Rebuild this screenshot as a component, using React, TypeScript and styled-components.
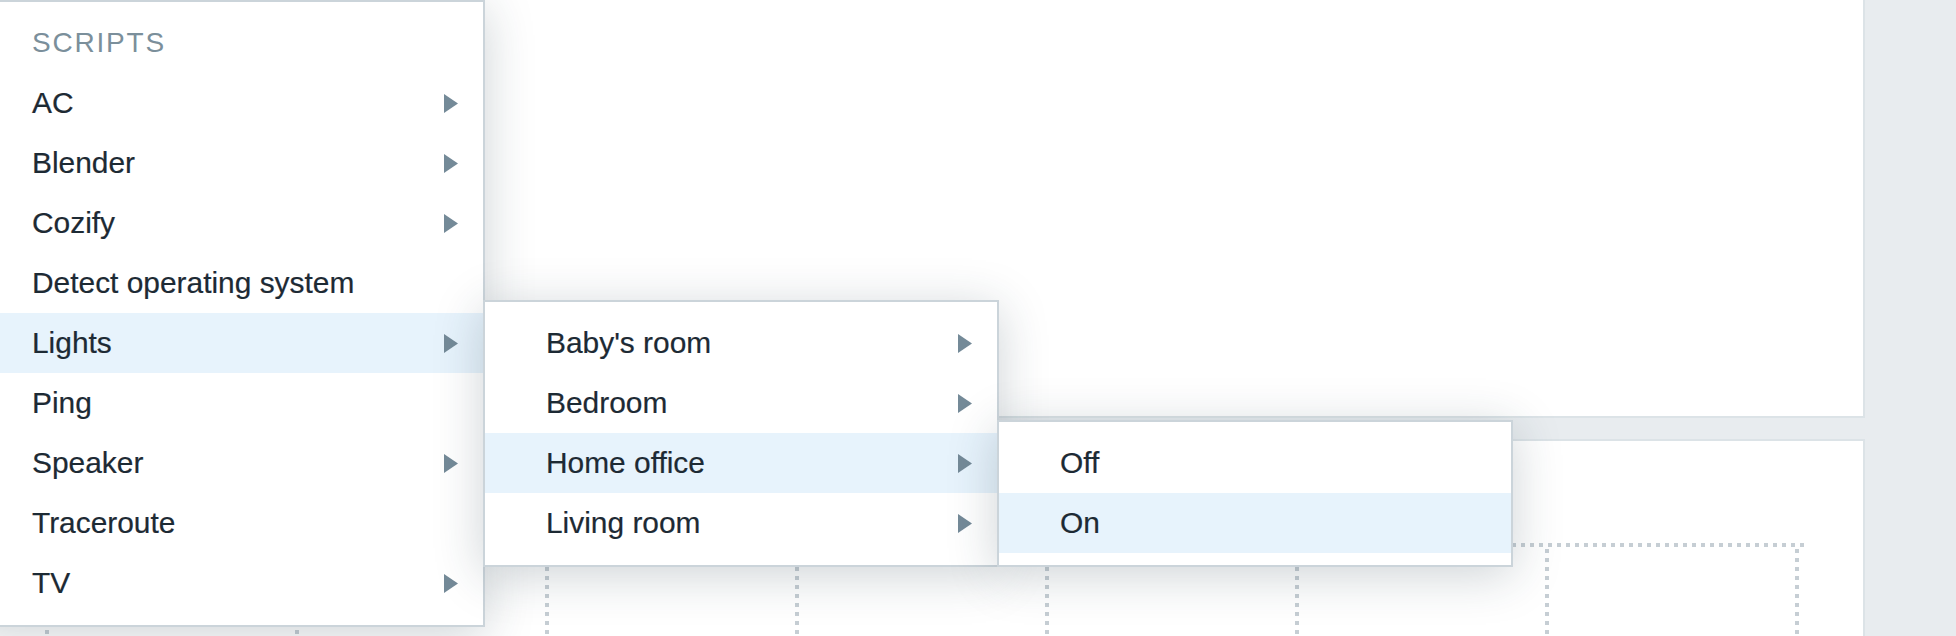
import * as React from "react";
import styled, { createGlobalStyle } from "styled-components";

interface MenuEntry {
  label: string;
  hasSub?: boolean;
  active?: boolean;
  children?: MenuEntry[];
}

const homeOffice: MenuEntry[] = [
  { label: "Off" },
  { label: "On", active: true },
];

const lights: MenuEntry[] = [
  { label: "Baby's room", hasSub: true },
  { label: "Bedroom", hasSub: true },
  { label: "Home office", hasSub: true, active: true, children: homeOffice },
  { label: "Living room", hasSub: true },
];

const scripts: MenuEntry[] = [
  { label: "AC", hasSub: true },
  { label: "Blender", hasSub: true },
  { label: "Cozify", hasSub: true },
  { label: "Detect operating system" },
  { label: "Lights", hasSub: true, active: true, children: lights },
  { label: "Ping" },
  { label: "Speaker", hasSub: true },
  { label: "Traceroute" },
  { label: "TV", hasSub: true },
];

const GlobalStyle = createGlobalStyle`
  html, body {
    margin: 0;
    padding: 0;
    background: #e8ecef;
    overflow: hidden;
  }
  body {
    font-family: "Liberation Sans", Arial, Helvetica, sans-serif;
    color: #1f2c36;
  }
`;

const Page = styled.div`
  position: relative;
  width: 1956px;
  height: 636px;
  box-sizing: border-box;
  padding-right: 91px;
  display: flex;
  flex-direction: column;
  gap: 21px;
  overflow: hidden;
`;

const TopCard = styled.div`
  height: 418px;
  box-sizing: border-box;
  background: #ffffff;
  border-right: 2px solid #dce3e7;
  border-bottom: 2px solid #dce3e7;
`;

const BottomCard = styled.div`
  flex: 1;
  box-sizing: border-box;
  background: #ffffff;
  border-top: 2px solid #dce3e7;
  border-right: 2px solid #dce3e7;
  padding: 102px 0 0 45px;
`;

const dot = "#c6ced4";

const Grid = styled.div`
  display: flex;
  width: 1762px;
  height: 100%;
  padding-top: 4px;
  background-image: linear-gradient(to right, ${dot} 4px, transparent 4px);
  background-size: 9px 4px;
  background-repeat: repeat-x;
  background-position: 0 0;
`;

interface CellProps {
  $last?: boolean;
}

const GridCell = styled.div<CellProps>`
  width: ${(p) => (p.$last ? "254px" : "250px")};
  flex-shrink: 0;
  height: 100%;
  background-image: linear-gradient(to bottom, ${dot} 4px, transparent 4px)
    ${(p) =>
      p.$last
        ? `, linear-gradient(to bottom, ${dot} 4px, transparent 4px)`
        : ""};
  background-size: 4px 9px;
  background-repeat: repeat-y;
  background-position: ${(p) => (p.$last ? "0 2px, 100% 2px" : "0 2px")};
`;

const MenuLayer = styled.div`
  position: absolute;
  top: 0;
  left: -31px;
  z-index: 5;
`;

const MenuPanel = styled.div`
  width: 516px;
  box-sizing: border-box;
  background: #ffffff;
  border: 2px solid #cbd4da;
  padding: 11px 0 12px;
  box-shadow: 0 8px 46px rgba(34, 54, 70, 0.22);
`;

const SubMenuSpot = styled.div`
  position: absolute;
  top: -13px;
  left: 100%;
  z-index: 2;
`;

const Heading = styled.div`
  height: 60px;
  display: flex;
  align-items: center;
  padding-left: 61px;
  font-size: 28px;
  letter-spacing: 1.8px;
  text-transform: uppercase;
  color: #7b8f9b;
`;

interface RowProps {
  $active?: boolean;
}

const Row = styled.div<RowProps>`
  position: relative;
  height: 60px;
  display: flex;
  align-items: center;
  justify-content: space-between;
  padding: 0 25px 0 61px;
  font-size: 29.9px;
  color: #1d2a34;
  -webkit-text-stroke: 0.2px #1d2a34;
  background: ${(p) => (p.$active ? "#e7f3fc" : "transparent")};
  white-space: nowrap;
`;

const Arrow = () => (
  <svg width="14" height="19" viewBox="0 0 14 19">
    <polygon points="0,0 14,9.5 0,19" fill="#748a98" />
  </svg>
);

interface MenuProps {
  title?: string;
  items: MenuEntry[];
}

const Menu = ({ title, items }: MenuProps) => (
  <MenuPanel>
    {title && <Heading>{title}</Heading>}
    {items.map((item) => (
      <Row key={item.label} $active={item.active}>
        <span>{item.label}</span>
        {item.hasSub && <Arrow />}
        {item.children && (
          <SubMenuSpot>
            <Menu items={item.children} />
          </SubMenuSpot>
        )}
      </Row>
    ))}
  </MenuPanel>
);

const columns = [0, 1, 2, 3, 4, 5, 6];

const App = () => (
  <>
    <GlobalStyle />
    <Page>
      <TopCard />
      <BottomCard>
        <Grid>
          {columns.map((c) => (
            <GridCell key={c} $last={c === columns.length - 1} />
          ))}
        </Grid>
      </BottomCard>
      <MenuLayer>
        <Menu title="Scripts" items={scripts} />
      </MenuLayer>
    </Page>
  </>
);

export default App;
